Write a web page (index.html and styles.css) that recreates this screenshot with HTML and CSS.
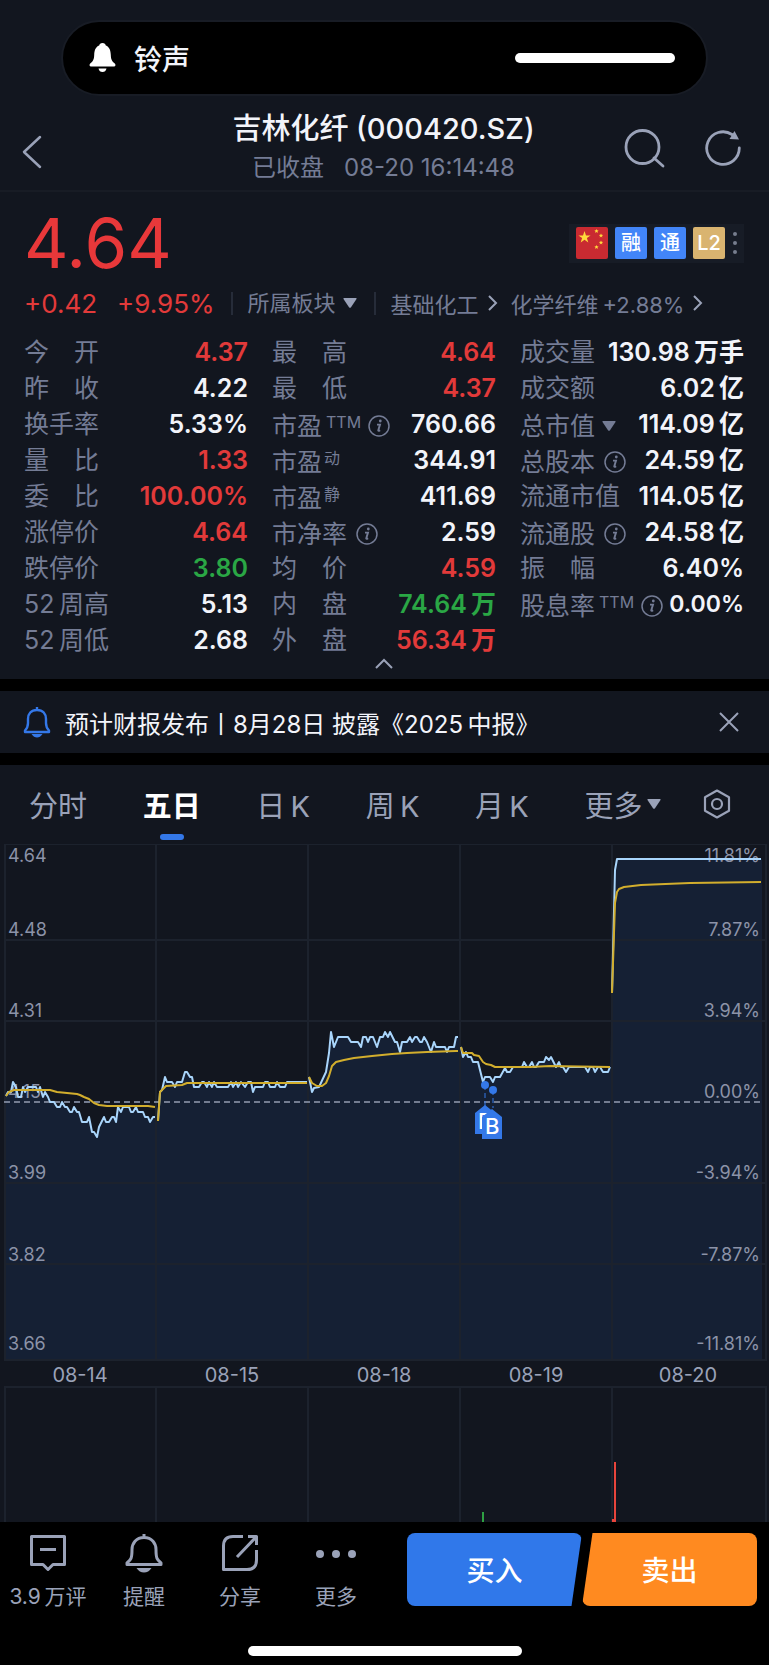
FILE: index.html
```html
<!DOCTYPE html>
<html lang="zh-CN">
<head>
  <meta charset="utf-8">
  <meta name="viewport" content="width=device-width, initial-scale=1">
  <title>吉林化纤(000420.SZ)</title>
  <link rel="stylesheet" href="styles.css">
</head>
<body>
  <!-- shared icons -->
  <svg class="defs" width="0" height="0">
    <symbol id="info" viewBox="0 0 22 22">
      <circle cx="11" cy="11" r="10" fill="none" stroke="currentColor" stroke-width="1.5"/>
      <circle cx="12.3" cy="6" r="1.4" fill="currentColor"/>
      <path d="M9 9.6h3l-1.7 5.6q-.3 1.4 1.8 0" fill="none" stroke="currentColor" stroke-width="1.9"/>
    </symbol>
    <symbol id="arrow" viewBox="0 0 10 16">
      <path d="M1 1l7 7-7 7" fill="none" stroke="currentColor" stroke-width="2"/>
    </symbol>
    <symbol id="down" viewBox="0 0 14 10">
      <path d="M1 0h12q1 0 .5 1L8 9.200q-1 1-2 0L.5 1Q0 0 1 0z" fill="currentColor"/>
    </symbol>
  </svg>

  <div class="island">
    <svg width="27" height="30" viewBox="0 0 27 30" fill="#fff"><path d="M13.500 0c2 0 3 1 3.300 2.600C20.500 4 21.600 7.500 21.800 12c.2 5 1.400 6.300 4 8.500 1.200 1.200.7 3-.8 3H2c-1.500 0-2-1.800-.8-3C3.800 18.300 5 17 5.200 12c.2-4.500 1.300-8 5-9.400C10.500 1 11.500 0 13.500 0zM9.500 25.500h8c-.5 2.500-2 3.500-4 3.500s-3.500-1-4-3.500z"/></svg>
    <span>铃声</span>
    <div class="volume"></div>
  </div>

  <header class="header">
    <button class="icon-btn" aria-label="返回"><svg width="20" height="34" viewBox="0 0 20 34"><path d="M18 2L2 17l16 15" fill="none" stroke="currentColor" stroke-width="2.500" stroke-linecap="round" stroke-linejoin="round"/></svg></button>
    <div class="title">
      <h1>吉林化纤 (000420.SZ)</h1>
      <p><span>已收盘</span><span>08-20 16:14:48</span></p>
    </div>
    <div class="header-icons">
      <button class="icon-btn" aria-label="搜索"><svg width="42" height="40" viewBox="0 0 42 40" fill="none" stroke="currentColor" stroke-width="2.800" stroke-linecap="round"><circle cx="18.500" cy="19" r="16.500"/><path d="M30 30l9 8"/></svg></button>
      <button class="icon-btn" aria-label="刷新"><svg width="38" height="38" viewBox="0 0 38 38" fill="none" stroke="currentColor" stroke-width="2.800" stroke-linecap="round"><path d="M28 5.500A16.300 16.300 0 1 0 35.300 19"/><path d="M30.500 2l4.500 8.500-9.500-.5z" fill="currentColor" stroke="none"/></svg></button>
    </div>
  </header>

  <section class="quote">
    <div class="price-row">
      <div class="price">4.64</div>
      <div class="badges">
        <svg width="32" height="32" viewBox="0 0 32 32"><rect width="32" height="32" rx="2" fill="#c92a31"/><g fill="#ffd93b"><path d="M8.500 4l1.500 4.400h4.600l-3.700 2.700 1.400 4.500-3.800-2.800-3.800 2.800 1.400-4.500-3.700-2.700H7z"/><path id="star" d="M20.500 2l.6 1.300 1.500.1-1.100 1 .3 1.500-1.300-.8-1.300.8.300-1.500-1.100-1 1.500-.1z"/><use href="#star" x="4.500" y="4.500"/><use href="#star" x="4.500" y="11.500"/><use href="#star" y="16"/></g></svg>
        <span class="badge">融</span>
        <span class="badge">通</span>
        <span class="badge gold">L2</span>
        <svg width="4" height="22" viewBox="0 0 4 22" fill="#777e8e"><circle cx="2" cy="2" r="2"/><circle cx="2" cy="11" r="2"/><circle cx="2" cy="20" r="2"/></svg>
      </div>
    </div>

    <div class="change-row">
      <span class="change red">+0.42</span>
      <span class="change red">+9.95%</span>
      <button class="sector-btn">所属板块<svg width="14" height="10"><use href="#down"/></svg></button>
      <a class="sector" href="#">基础化工<svg width="10" height="16"><use href="#arrow"/></svg></a>
      <a class="sector" href="#">化学纤维&thinsp;+2.88%<svg width="10" height="16"><use href="#arrow"/></svg></a>
    </div>

    <div class="stats">
      <dl>
        <div><dt class="two"><i>今</i><i>开</i></dt><dd class="red">4.37</dd></div>
        <div><dt class="two"><i>昨</i><i>收</i></dt><dd>4.22</dd></div>
        <div><dt>换手率</dt><dd>5.33%</dd></div>
        <div><dt class="two"><i>量</i><i>比</i></dt><dd class="red">1.33</dd></div>
        <div><dt class="two"><i>委</i><i>比</i></dt><dd class="red">100.00%</dd></div>
        <div><dt>涨停价</dt><dd class="red">4.64</dd></div>
        <div><dt>跌停价</dt><dd class="green">3.80</dd></div>
        <div><dt>52&thinsp;周高</dt><dd>5.13</dd></div>
        <div><dt>52&thinsp;周低</dt><dd>2.68</dd></div>
      </dl>
      <dl>
        <div><dt class="two"><i>最</i><i>高</i></dt><dd class="red">4.64</dd></div>
        <div><dt class="two"><i>最</i><i>低</i></dt><dd class="red">4.37</dd></div>
        <div><dt class="low">市盈<sup class="ttm">TTM</sup><svg width="22" height="22"><use href="#info"/></svg></dt><dd>760.66</dd></div>
        <div><dt class="low">市盈<sup>动</sup></dt><dd>344.91</dd></div>
        <div><dt class="low">市盈<sup>静</sup></dt><dd>411.69</dd></div>
        <div><dt class="low">市净率<svg width="22" height="22"><use href="#info"/></svg></dt><dd>2.59</dd></div>
        <div><dt class="two"><i>均</i><i>价</i></dt><dd class="red">4.59</dd></div>
        <div><dt class="two"><i>内</i><i>盘</i></dt><dd class="green">74.64&thinsp;万</dd></div>
        <div><dt class="two"><i>外</i><i>盘</i></dt><dd class="red">56.34&thinsp;万</dd></div>
      </dl>
      <dl>
        <div><dt>成交量</dt><dd>130.98&thinsp;万手</dd></div>
        <div><dt>成交额</dt><dd>6.02&thinsp;亿</dd></div>
        <div><dt class="low">总市值<svg class="tri" width="14" height="10"><use href="#down"/></svg></dt><dd>114.09&thinsp;亿</dd></div>
        <div><dt class="low">总股本<svg width="22" height="22"><use href="#info"/></svg></dt><dd>24.59&thinsp;亿</dd></div>
        <div><dt>流通市值</dt><dd>114.05&thinsp;亿</dd></div>
        <div><dt class="low">流通股<svg width="22" height="22"><use href="#info"/></svg></dt><dd>24.58&thinsp;亿</dd></div>
        <div><dt class="two"><i>振</i><i>幅</i></dt><dd>6.40%</dd></div>
        <div><dt class="low">股息率<sup class="ttm">TTM</sup><svg width="22" height="22"><use href="#info"/></svg></dt><dd class="small">0.00%</dd></div>
      </dl>
    </div>
    <button class="collapse" aria-label="收起"><svg width="18" height="12" viewBox="0 0 18 12"><path d="M1 10l8-8 8 8" fill="none" stroke="currentColor" stroke-width="2"/></svg></button>
  </section>

  <section class="notice">
    <svg width="28" height="32" viewBox="0 0 28 32" fill="none" stroke="#3478e8" stroke-width="2.400"><path d="M14 1v3M14 4C8 4 5 8 5 13v4c0 4-1 5.500-3 7.500V26h24v-1.500c-2-2-3-3.500-3-7.500v-4c0-5-3-9-9-9z" stroke-linejoin="round"/><path d="M8.500 28h11c-1.500 2.500-3.500 3.500-5.500 3.500s-4-1-5.500-3.500z" fill="#3478e8" stroke="none"/></svg>
    <p>预计财报发布丨8月28日 披露《2025&thinsp;中报》</p>
    <button class="icon-btn" aria-label="关闭"><svg width="20" height="20" viewBox="0 0 20 20"><path d="M1 1l18 18M19 1L1 19" stroke="currentColor" stroke-width="2"/></svg></button>
  </section>

  <main>
    <nav class="tabs">
      <button>分时</button>
      <button class="active">五日</button>
      <button>日&thinsp;K</button>
      <button>周&thinsp;K</button>
      <button>月&thinsp;K</button>
      <button>更多<svg width="14" height="10"><use href="#down"/></svg></button>
      <button class="settings" aria-label="设置"><svg width="28" height="30" viewBox="0 0 28 30" fill="none" stroke="currentColor" stroke-width="2.200" stroke-linejoin="round"><path d="M14 1.500l12 6.800v13.400l-12 6.800-12-6.800V8.300z"/><circle cx="14" cy="15" r="5"/></svg></button>
    </nav>

    <svg class="chart" viewBox="0 0 769 678">
      <!-- area under price -->
      <path class="area" d="M6 516V252L8 248 11 248 13 238 16 243 18 253 21 253 23 243 25 248 28 243 36 243 38 248 40 243 43 253 45 248 50 258 54 258 57 263 60 263 62 258 65 263 67 263 70 268 72 268 74 263 77 268 79 268 82 278 87 278 89 273 92 288 94 288 97 293 99 283 104 273 106 278 109 278 112 273 114 273 116 278 118 263 121 268 123 263 129 263 131 268 133 268 136 263 138 268 143 268 145 273 148 273 150 278 153 273 158 273 160 248 162 246 165 233 167 238 182 238 185 228 187 228 192 233 194 243 253 243 307 238 312 248 319 243 326 228 331 188 334 203 338 193 348 193 351 198 358 198 361 203 363 193 373 193 377 203 380 193 390 188 395 198 400 208 402 198 417 193 427 198 431 208 434 198 436 203 454 203 456 193 460 193 463 213 466 208 471 213 473 218 478 218 483 238 485 233 490 233 493 238 495 233 500 233 505 224 510 228 513 223 546 216 551 213 556 223 610 226 612 149 615 26 617 15 762 15V516z"/>
      <!-- grid -->
      <g class="grid">
        <path d="M5 0H766V516H5zM5 96H766M5 177H766M5 339H766M5 420H766"/>
        <path d="M156 0V516M308 0V516M460 0V516M612 0V516"/>
        <path d="M5 678V543H766V678M156 543V678M308 543V678M460 543V678M612 543V678"/>
      </g>
      <g class="axis">
        <text x="8" y="18">4.64</text>
        <text x="8" y="92">4.48</text>
        <text x="8" y="173">4.31</text>
        <text x="8" y="254">4.15</text>
        <text x="8" y="335">3.99</text>
        <text x="8" y="417">3.82</text>
        <text x="8" y="506">3.66</text>
      </g>
      <g class="axis right">
        <text x="760" y="18">11.81%</text>
        <text x="760" y="92">7.87%</text>
        <text x="760" y="173">3.94%</text>
        <text x="760" y="254">0.00%</text>
        <text x="760" y="335">-3.94%</text>
        <text x="760" y="417">-7.87%</text>
        <text x="760" y="506">-11.81%</text>
      </g>
      <path class="zero" d="M4 258H763"/>
      <!-- price -->
      <g class="line price-line">
        <polyline points="6,252 8,248 11,248 13,238 16,243 18,253 21,253 23,243 25,248 28,243 36,243 38,248 40,243 43,253 45,248 48,253 50,258 54,258 57,263 60,263 62,258 65,263 67,263 70,268 72,268 74,263 77,268 79,268 82,278 87,278 89,273 92,288 94,288 97,293 99,283 104,273 106,278 109,278 112,273 114,273 116,278 118,263 121,268 123,263 129,263 131,268 133,268 136,263 138,268 143,268 145,273 148,273 150,278 153,273 155,273"/>
        <polyline points="158,277 160,248 162,246 165,233 167,238 172,238 175,243 177,238 182,238 185,228 187,228 190,233 192,233 194,243 199,243 202,238 204,238 207,243 209,238 212,243 214,238 217,243 228,243 231,238 233,243 236,238 238,243 241,238 245,243 248,238 251,238 253,248 255,243 263,243 265,238 268,238 270,243 275,243 277,238 280,243 285,243 287,238 307,238"/>
        <polyline points="309,233 312,248 314,244 319,243 326,228 329,209 331,188 334,203 338,193 348,193 351,198 358,198 361,203 363,193 366,193 368,198 370,193 373,193 377,203 380,193 383,193 385,188 388,193 390,188 395,198 397,198 400,208 402,198 407,198 410,193 412,198 415,193 417,193 420,198 422,198 424,193 427,198 431,208 434,198 436,203 445,203 447,208 449,203 454,203 456,193 458,193"/>
        <polyline points="461,203 463,213 466,208 468,213 471,213 473,218 478,218 483,238 485,233 490,233 493,238 495,233 500,233 505,224 507,228 510,228 513,223 522,223 524,218 527,223 529,223 532,218 534,223 536,223 539,218 544,218 546,213 549,216 551,213 556,223 559,218 561,223 563,223 566,228 569,223 585,223 588,228 590,223 593,223 595,228 598,223 600,223 603,228 608,228 610,223"/>
        <polyline points="612,149 615,26 617,15 761,15"/>
      </g>
      <!-- average -->
      <g class="line avg-line">
        <polyline points="6,252 9,248 14,246 50,246 57,248 77,250 80,251 84,253 89,255 94,259 99,261 107,262 148,262 155,263"/>
        <polyline points="158,277 160,248 166,242 182,241 187,239 200,239 233,239 307,239"/>
        <polyline points="309,233 312,239 317,242 322,242 326,239 329,232 332,222 336,218 344,216 354,214 372,212 392,210 407,209 427,208 456,207 458,207"/>
        <polyline points="461,203 463,209 472,209 474,211 479,212 483,218 486,220 491,221 495,223 530,223 550,222 610,223"/>
        <polyline points="612,149 615,59 617,48 619,45 624,43 641,41 690,39 761,38"/>
      </g>
      <!-- buy marks -->
      <g class="mark">
        <path class="stem" d="M485 241V262M493 246V264"/>
        <circle cx="485" cy="241" r="4"/><circle cx="493" cy="246" r="4"/>
        <path d="M485 261l10 8v21h-20v-21z"/><text x="478" y="285">B</text>
        <path d="M492 265l10 8v22h-20v-22z"/><text x="485" y="290">B</text>
      </g>
      <g class="dates">
        <text x="80" y="538">08-14</text>
        <text x="232" y="538">08-15</text>
        <text x="384" y="538">08-18</text>
        <text x="536" y="538">08-19</text>
        <text x="688" y="538">08-20</text>
      </g>
      <!-- volume bars -->
      <path d="M483 668V678" stroke="#2ea043" stroke-width="2"/>
      <path d="M613 675V678M615 618V678" stroke="#e8453c" stroke-width="2"/>
    </svg>
  </main>

  <footer class="footer">
    <div class="actions">
      <button class="action"><svg width="40" height="40" viewBox="0 0 40 40"><path d="M3.500 3.500h33v28H25l-5 5-5-5H3.500zM12 16.500h16"/></svg>3.9&thinsp;万评</button>
      <button class="action"><svg width="40" height="40" viewBox="0 0 40 40"><path d="M20 1v4M20 4.500c-8 0-12 6-12 12 0 9-1 10-5 13.500v1.500h34V30c-4-3.500-5-4.500-5-13.500 0-6-4-12-12-12z"/><path d="M12.500 35h15q-3 4.500-7.500 4.500T12.500 35z" fill="currentColor" stroke="none"/></svg>提醒</button>
      <button class="action"><svg width="40" height="40" viewBox="0 0 40 40"><path d="M23 3.500H13q-9.500 0-9.500 9.500v23.500H27q9.500 0 9.500-9.500V17M28 3.500h8.500V12M36 4L17 24"/></svg>分享</button>
      <button class="action"><svg width="40" height="40" viewBox="0 0 40 40"><g fill="currentColor" stroke="none"><circle cx="4" cy="21" r="4"/><circle cx="20" cy="21" r="4"/><circle cx="36" cy="21" r="4"/></g></svg>更多</button>
    </div>
    <div class="trade">
      <button class="buy">买入</button>
      <button class="sell">卖出</button>
    </div>
    <div class="home"></div>
  </footer>
</body>
</html>
```
FILE: styles.css
```css
* { box-sizing: border-box; }
body { margin: 0; background: #12161f; color: #f2f4fa; font-family: Inter, "Noto Sans CJK SC", sans-serif; font-size: 25px; }
button { border: 0; padding: 0; margin: 0; background: none; color: inherit; font: inherit; cursor: pointer; }
a { color: inherit; text-decoration: none; }
h1, p, dl, dd { margin: 0; }
svg { display: block; flex: none; }
.defs { position: absolute; }
.red { color: #e23a3a; }
.green { color: #2aa745; }

.island { display: flex; align-items: center; gap: 18px; height: 76px; margin: 20px 61px 0; padding: 0 31px 0 26px; background: #000; border: 2px solid #181c25; border-radius: 38px; font-size: 28px; font-weight: 500; }
.volume { width: 160px; height: 10px; margin-left: auto; border-radius: 5px; background: #fff; }

.header { display: grid; grid-template-columns: 120px 1fr 120px; align-items: center; height: 96px; padding: 10px 24px 0 22px; border-bottom: 2px solid #181c25; color: #9aa2b8; }
.header > .icon-btn { justify-self: start; padding-top: 8px; }
.title { text-align: center; }
.title h1 { font-size: 29px; line-height: 40px; font-weight: 500; color: #f2f4fa; white-space: nowrap; }
.title p { display: flex; justify-content: center; gap: 20px; font-size: 24px; line-height: 38px; color: #747c95; white-space: nowrap; }
.header-icons { display: flex; justify-content: flex-end; align-items: center; gap: 38px; padding-right: 3px; }

.quote { padding: 14px 25px 0 24px; height: 487px; }
.price-row { display: flex; justify-content: space-between; align-items: center; height: 74px; }
.price { font-size: 69px; line-height: 74px; color: #e8383a; }
.badges { display: flex; align-items: center; gap: 7px; height: 39px; padding: 0 7px; background: #171c26; }
.badges svg:last-child { margin-left: 1px; }
.badge { width: 32px; height: 32px; border-radius: 2px; background: #4285f8; color: #fff; font-size: 20px; line-height: 32px; font-weight: 500; text-align: center; }
.gold { background: #d9b470; }

.change-row { display: flex; align-items: center; height: 46px; color: #747c95; font-size: 22px; white-space: nowrap; }
.change { font-size: 26px; margin-right: 20px; }
.change + .change { margin-right: 16px; }
.sector-btn { display: flex; align-items: center; gap: 7px; height: 23px; padding: 0 17px 0 15px; margin-right: 15px; border: 2px solid #262c39; border-width: 0 2px; line-height: 23px; }
.sector-btn svg, .sector svg { color: #9aa2b8; }
.sector { display: flex; align-items: center; gap: 9px; margin-right: 13px; }

.stats { display: grid; grid-template-columns: repeat(3, 1fr); gap: 24px; margin-top: 8px; color: #f2f4fa; }
.stats dl > div { display: flex; justify-content: space-between; height: 36px; line-height: 36px; white-space: nowrap; }
.stats dt { display: flex; align-items: center; color: #747c95; }
.stats dd { font-weight: 600; }
.stats .small { font-size: 23px; }
.two { width: 75px; justify-content: space-between; }
.two i { font-style: normal; }
.low { padding-top: 4px; }
.low svg { margin-left: 9px; }
.low .tri { margin-left: 7px; }
sup { align-self: flex-start; font-size: 16px; line-height: 24px; margin-left: 2px; }
.ttm { margin-left: 4px; }
.ttm + svg { margin-left: 7px; }
.collapse { display: block; margin: 0 auto; color: #9aa2b8; }

.notice { display: flex; align-items: center; gap: 14px; height: 86px; padding: 0 30px 0 23px; border: solid #000; border-width: 12px 0; font-size: 24px; }
.notice .icon-btn { margin-left: auto; color: #9aa2b8; }

.tabs { display: flex; justify-content: space-between; height: 79px; padding: 0 38px 2px 29px; color: #9aa2b8; font-size: 29px; }
.tabs button { display: flex; align-items: center; gap: 5px; position: relative; }
.tabs .active { color: #fff; font-weight: 700; }
.tabs .active::after { content: ""; position: absolute; left: 17px; bottom: 2px; width: 24px; height: 6px; border-radius: 3px; background: #3478e8; }
.tabs .settings { margin-left: -14px; }

.chart { width: 100%; height: auto; overflow: hidden; }
.area { fill: #152034; }
.grid { fill: none; stroke: #1c222d; stroke-width: 2; }
.axis { fill: #8c93a8; font-size: 18px; }
.right { text-anchor: end; }
.zero { stroke: #747d91; stroke-width: 2; stroke-dasharray: 6 4; }
.line { fill: none; stroke-width: 2; stroke-linejoin: round; }
.price-line { stroke: #a9d5fb; }
.avg-line { stroke: #d2ae2d; }
.mark { fill: #3478e8; font-size: 22px; font-weight: 500; }
.mark text { fill: #fff; }
.stem { stroke: #3478e8; stroke-width: 1; stroke-dasharray: 5 3; }
.dates { fill: #9aa2b8; font-size: 20px; text-anchor: middle; }

.footer { display: grid; grid-template-columns: 384fr 350fr; column-gap: 23px; padding: 11px 12px 16px 0; background: #000; }
.actions { display: grid; grid-template-columns: repeat(4, 1fr); color: #9aa2b8; }
.action { display: flex; flex-direction: column; align-items: center; gap: 8px; font-size: 21px; line-height: 32px; white-space: nowrap; }
.action svg { fill: none; stroke: currentColor; stroke-width: 3; stroke-linejoin: round; }
.trade { display: grid; grid-template-columns: 1fr 1fr; color: #fff; font-size: 28px; font-weight: 500; }
.trade button { height: 73px; padding-bottom: 2px; border-radius: 8px; }
.buy { background: #3078ea; clip-path: polygon(0 0, 100% 0, 94% 100%, 0 100%); }
.sell { background: #ff8a20; clip-path: polygon(6% 0, 100% 0, 100% 100%, 0 100%); }
.home { grid-column: 1 / -1; justify-self: center; width: 274px; height: 10px; margin: 33px 0 0 12px; border-radius: 5px; background: #fff; }
```
